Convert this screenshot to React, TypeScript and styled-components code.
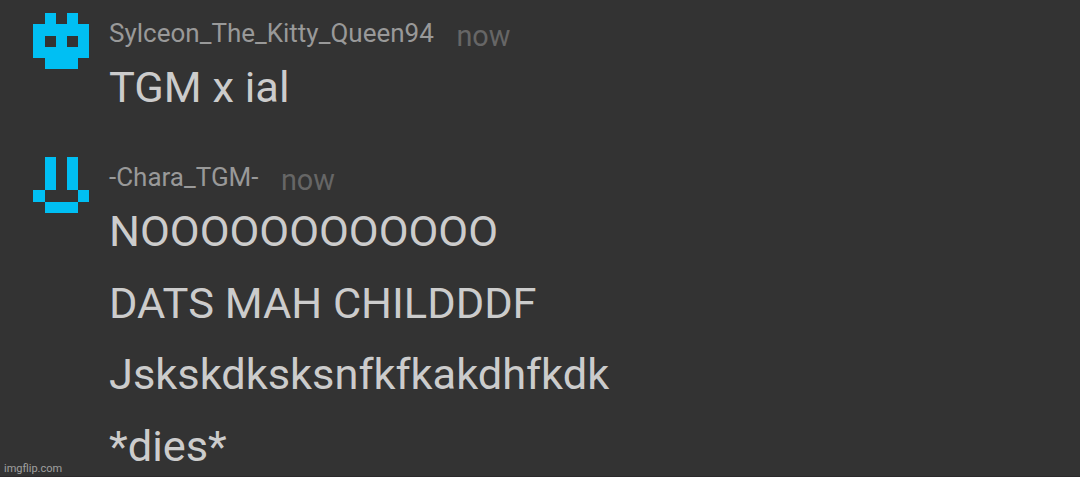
import React from "react";
import styled, { createGlobalStyle } from "styled-components";

const GlobalStyle = createGlobalStyle`
  body { margin: 0; background: #333333; }
`;

const Page = styled.main`
  position: relative;
  box-sizing: border-box;
  width: 1080px;
  height: 477px;
  overflow: hidden;
  background: #333333;
  border-bottom: 1px solid #2b292b;
  font-family: Roboto, sans-serif;
`;

const Thread = styled.div`
  display: flex;
  flex-direction: column;
  gap: 20.3px;
`;

const Post = styled.article`
  display: grid;
  grid-template-columns: 56px 1fr;
  column-gap: 20px;
  padding-left: 33px;
`;

const Avatar = styled.svg`
  display: block;
  width: 56px;
  height: 56px;
  margin-top: 13px;
`;

const Header = styled.header`
  display: flex;
  align-items: flex-start;
  height: 52px;
  white-space: nowrap;
`;

const Author = styled.span<{ $width: number }>`
  width: ${(p) => p.$width}px;
  padding-top: 18px;
  font-size: 26px;
  line-height: 30px;
  color: #999999;
`;

const Time = styled.span`
  padding-top: 19px;
  font-size: 28.8px;
  line-height: 34px;
  color: #666666;
`;

const Line = styled.p`
  margin: 0;
  font-size: 43.38px;
  line-height: 71.7px;
  color: #cccccc;
  white-space: nowrap;
`;

const Watermark = styled.div`
  position: absolute;
  left: 4px;
  bottom: -1px;
  font-family: Roboto, sans-serif;
  font-size: 11px;
  line-height: 16px;
  color: #a0a0a0;
`;

type PostData = {
  author: string;
  authorWidth: number;
  avatar: string;
  lines: string[];
};

const posts: PostData[] = [
  {
    author: "Sylceon_The_Kitty_Queen94",
    authorWidth: 347.4,
    avatar:
      "M12 0H23V11H34V0H45V11H56V45H45V56H12V45H0V11H12ZM12 23V34H23V23ZM34 23V34H45V23Z",
    lines: ["TGM x ial"],
  },
  {
    author: "-Chara_TGM-",
    authorWidth: 171.9,
    avatar: "M12 0H23V33H12ZM34 0H45V33H34ZM0 33H12V45H0ZM45 33H56V45H45ZM12 45H45V56H12Z",
    lines: ["NOOOOOOOOOOOO", "DATS MAH CHILDDDF", "Jskskdksksnfkfkakdhfkdk", "*dies*"],
  },
];

export default function App() {
  return (
    <Page>
      <GlobalStyle />
      <Thread>
        {posts.map((post) => (
          <Post key={post.author}>
            <Avatar viewBox="0 0 56 56" aria-hidden="true">
              <path d={post.avatar} fill="#00bff3" fillRule="evenodd" shapeRendering="crispEdges" />
            </Avatar>
            <div>
              <Header>
                <Author $width={post.authorWidth}>{post.author}</Author>
                <Time>now</Time>
              </Header>
              {post.lines.map((line) => (
                <Line key={line}>{line}</Line>
              ))}
            </div>
          </Post>
        ))}
      </Thread>
      <Watermark>imgflip.com</Watermark>
    </Page>
  );
}
